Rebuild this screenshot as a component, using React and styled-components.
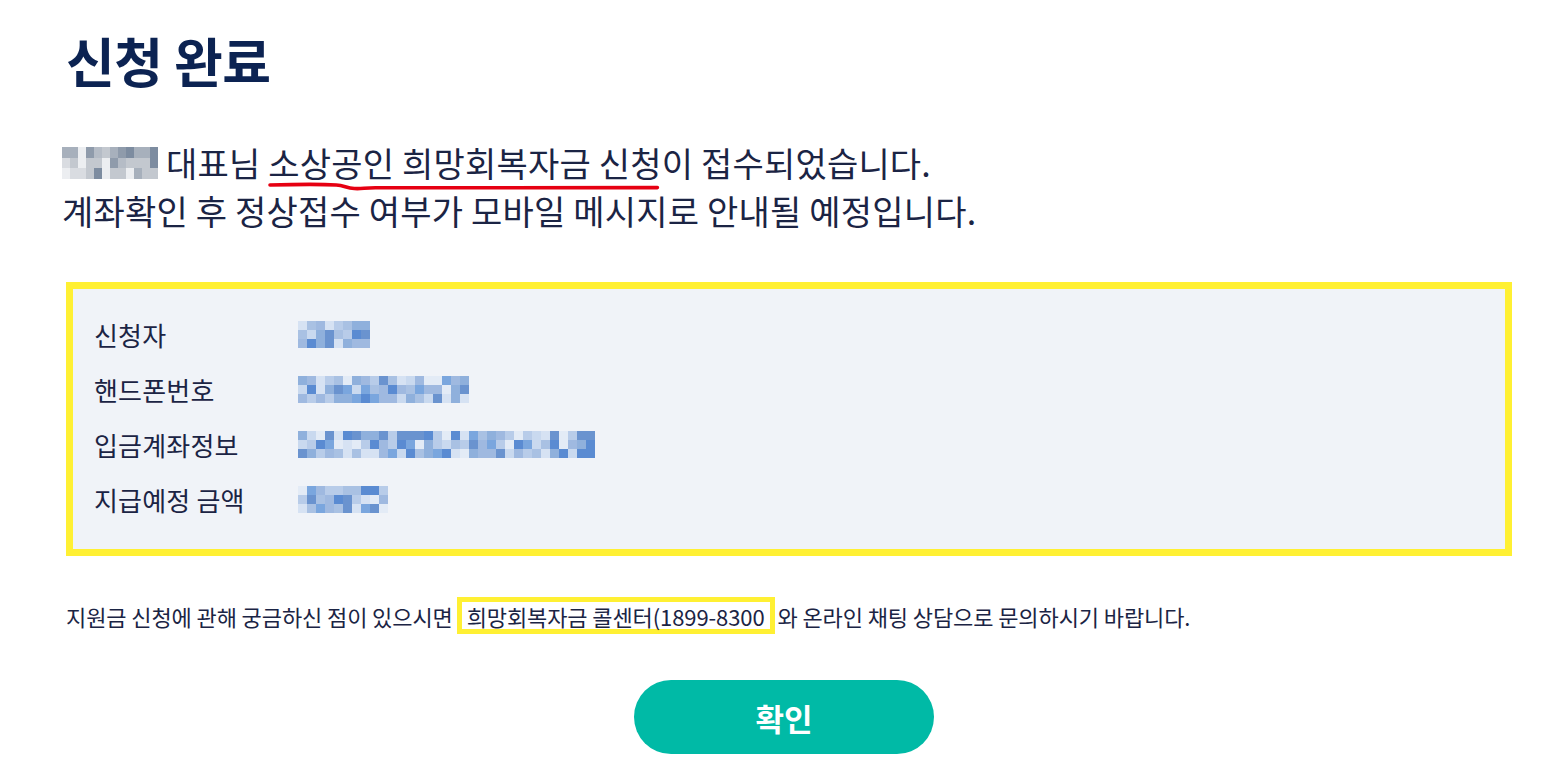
import styled, { createGlobalStyle } from "styled-components";

const GlobalStyle = createGlobalStyle`
  html, body {
    margin: 0;
    padding: 0;
    background: #ffffff;
  }
  body {
    font-family: "Noto Sans CJK KR", "Noto Sans", sans-serif;
    color: #1b2444;
  }
`;

// pixelated placeholders for the blurred personal data
const blue = ["#a9c1e3", "#c9d9ef", "#8fb0dc", "#6a93cf", "#e3ebf6", "#b8cce9", "#7aa6de", "#9fb9e0", "#d6e2f3", "#5a8bd2"];
const gray = ["#d9dce1", "#a7b0bc", "#c3c8cf", "#7d8ca0", "#eceef1", "#b5bcc6", "#8f9bab"];

const mosaic = (cols, rows, palette, seed) => {
  let s = seed;
  const out = [];
  for (let r = 0; r < rows; r++) {
    for (let c = 0; c < cols; c++) {
      s = (s * 9301 + 49297) % 233280;
      out.push(palette[Math.floor(s / 7) % palette.length]);
    }
  }
  return out;
};

const rows = [
  { label: "신청자", cols: 8, seed: 11 },
  { label: "핸드폰번호", cols: 19, seed: 27 },
  { label: "입금계좌정보", cols: 33, seed: 53 },
  { label: "지급예정 금액", cols: 10, seed: 71 },
];

const App = () => {
  return (
    <>
      <GlobalStyle />
      <StyledPage>
        <StyledTitle>신청 완료</StyledTitle>

        <StyledMessage>
          <StyledLine>
            <StyledMosaic $cols={12} $cell={8} $h={10.5}>
              {mosaic(12, 3, gray, 5).map((c, i) => (
                <StyledCell key={i} $c={c} />
              ))}
            </StyledMosaic>
            대표님{" "}
            <StyledMarked>
              소상공인 희망회복자금 신청
              <svg viewBox="0 0 392 10" preserveAspectRatio="none" width="100%" height="10">
                <path
                  d="M2 3 C40 2 60 2.5 68 3 C76 3.5 78 6 86 6.5 C95 7 96 5.5 110 5.8 L388 5.6"
                  fill="none"
                  stroke="#e60012"
                  strokeWidth="3.6"
                  strokeLinecap="round"
                  vectorEffect="non-scaling-stroke"
                />
              </svg>
            </StyledMarked>
            이 접수되었습니다.
          </StyledLine>
          <StyledLine>계좌확인 후 정상접수 여부가 모바일 메시지로 안내될 예정입니다.</StyledLine>
        </StyledMessage>

        <StyledInfoBox>
          {rows.map((row) => (
            <StyledInfoRow key={row.label}>
              <StyledLabel>{row.label}</StyledLabel>
              <StyledMosaic $cols={row.cols} $cell={9} $h={9.3}>
                {mosaic(row.cols, 3, blue, row.seed).map((c, i) => (
                  <StyledCell key={i} $c={c} />
                ))}
              </StyledMosaic>
            </StyledInfoRow>
          ))}
        </StyledInfoBox>

        <StyledNotice>
          지원금 신청에 관해 궁금하신 점이 있으시면
          <StyledHighlight>희망회복자금 콜센터(1899-8300</StyledHighlight>
          와 온라인 채팅 상담으로 문의하시기 바랍니다.
        </StyledNotice>

        <StyledButtonRow>
          <StyledConfirmButton type="button">확인</StyledConfirmButton>
        </StyledButtonRow>
      </StyledPage>
    </>
  );
};

const StyledPage = styled.div`
  width: 1448px;
  padding: 31px 0 0 66px;
  display: flex;
  flex-direction: column;
`;

const StyledTitle = styled.h1`
  margin: 0;
  font-size: 53px;
  line-height: 58px;
  font-weight: 700;
  color: #0c2352;
  letter-spacing: -0.5px;
`;

const StyledMessage = styled.div`
  margin-top: 50px;
  margin-left: -4px;
  font-size: 34px;
  line-height: 48px;
  font-weight: 400;
  color: #1b2444;
  letter-spacing: 0.2px;
`;

const StyledLine = styled.div`
  display: flex;
  align-items: center;
  white-space: pre;
`;

const StyledMarked = styled.span`
  position: relative;
  svg {
    position: absolute;
    left: 0;
    bottom: -5px;
    overflow: visible;
  }
`;

const StyledMosaic = styled.div`
  display: grid;
  grid-template-columns: repeat(${(p) => p.$cols}, ${(p) => p.$cell}px);
  grid-auto-rows: ${(p) => p.$h}px;
  margin-right: 8px;
  filter: blur(0.4px);
`;

const StyledCell = styled.span`
  background: ${(p) => p.$c};
`;

const StyledInfoBox = styled.div`
  margin-top: 47px;
  width: 1446px;
  box-sizing: border-box;
  border: 7px solid #fff033;
  background: #f0f3f8;
  padding: 18px 21px 22px;
  display: flex;
  flex-direction: column;
`;

const StyledInfoRow = styled.div`
  height: 55px;
  display: grid;
  grid-template-columns: 204px auto;
  align-items: center;
`;

const StyledLabel = styled.span`
  font-size: 26px;
  color: #1b2444;
  letter-spacing: 0.2px;
`;

const StyledNotice = styled.p`
  margin: 41px 0 0;
  height: 37px;
  display: flex;
  align-items: center;
  white-space: pre;
  font-size: 22px;
  color: #1b2444;
  letter-spacing: -0.1px;
`;

const StyledHighlight = styled.span`
  margin: 0 3px 0 4px;
  height: 37px;
  box-sizing: border-box;
  border: 5px solid #fff033;
  padding: 0 5px;
  display: inline-flex;
  align-items: center;
`;

const StyledButtonRow = styled.div`
  margin-top: 46px;
  display: flex;
  justify-content: center;
  padding-right: 12px;
`;

const StyledConfirmButton = styled.button`
  width: 300px;
  height: 74px;
  border: none;
  border-radius: 37px;
  background: #00baa6;
  color: #ffffff;
  font-family: "Noto Sans CJK KR", sans-serif;
  font-size: 31px;
  font-weight: 700;
  cursor: pointer;
`;

export default App;
